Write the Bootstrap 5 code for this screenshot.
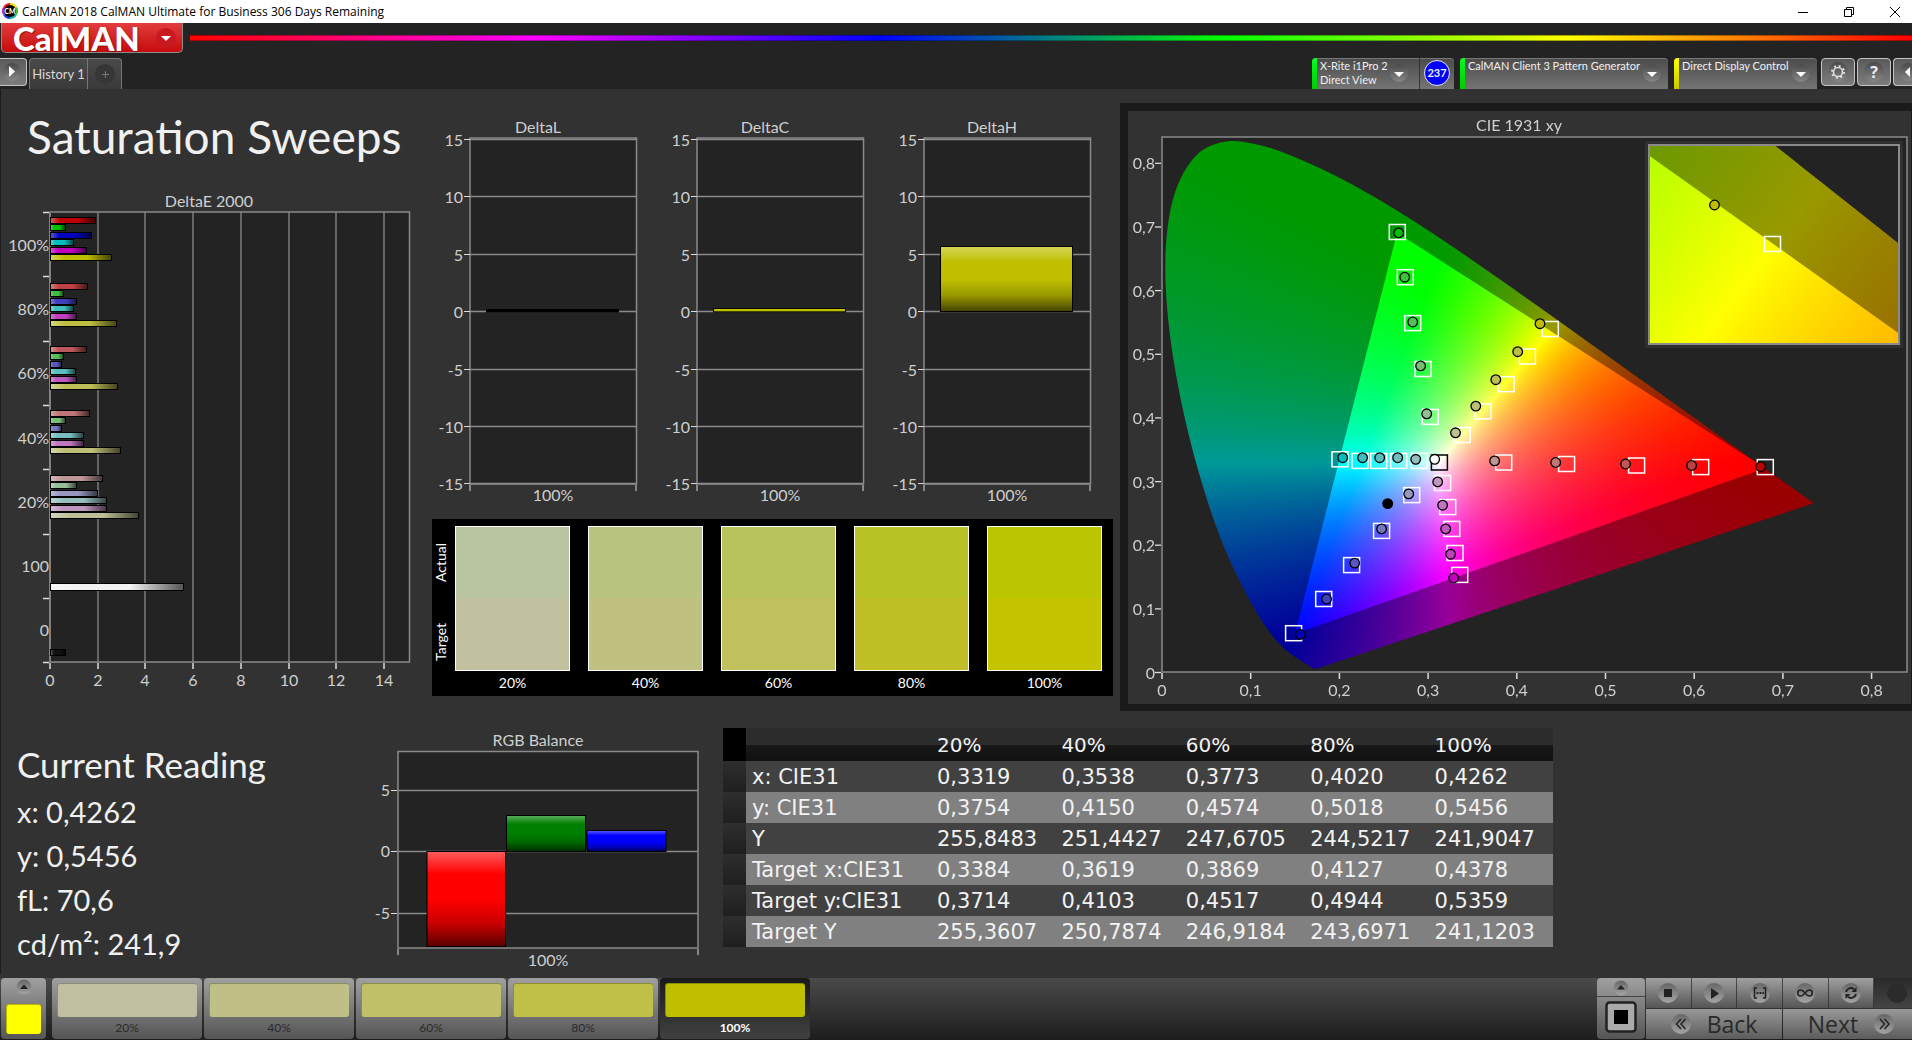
<!DOCTYPE html>
<html lang="en">
<head>
<meta charset="utf-8">
<meta name="viewport" content="width=device-width, initial-scale=1">
<title>CalMAN 2018 CalMAN Ultimate for Business</title>
<link href="https://cdn.jsdelivr.net/npm/bootstrap@5.3.0/dist/css/bootstrap.min.css" rel="stylesheet">
<style>
  body { background: #323232; color: #f0f0f0; font-family: Lato, "Open Sans", sans-serif; font-size: 16px; overflow-x: hidden; }
  button { font-family: inherit; }
  svg { display: block; }
  .window-bar { background: #fff; color: #000; height: 23px; font: 12px/23px "Open Sans", "Noto Sans", sans-serif; overflow: hidden; }
  .app-icon { margin: 3px 4px 0 2px; }
  .window-controls { margin-right: -6px; }
  .window-btn { background: none; border: 0; padding: 0; width: 46px; height: 23px; display: flex; align-items: center; justify-content: center; }
  .brand-row { background: #232323; height: 34px; }
  .brand-btn { width: 182px; height: 30px; margin-left: 1px; border: 1px solid #8d8d8d; border-top: 0; border-radius: 0 0 5px 5px; background: linear-gradient(#e23d3d, #c70b0b); color: #fff; padding: 0 6px 0 11px; font-weight: 900; font-size: 33px; line-height: 28px; text-shadow: 1px 1px 1px #6009; }
  .spectrum { height: 6px; margin: 12px 0 0 7px; background: linear-gradient(90deg, #f00, #f0f, #00f, #0f0, #ff0, #f00); border: 1px solid #0005; border-width: 1px 0; }
  .tab-row { background: #232323; height: 32px; padding-top: 1px; font-size: 11px; line-height: 14px; overflow: hidden; }
  .glass { border: 1px solid #c4c4c4; border-radius: 4px; background: linear-gradient(#5a5a5a, #7d7d7d); padding: 0; width: 34px; height: 28px; display: flex; align-items: center; justify-content: center; margin-right: 2px; }
  .glass-edge { width: 19px; margin-right: 0; }
  .glass-open { width: 27px; }
  .history-tabs { border: 1px solid #777; border-bottom: 0; border-radius: 4px 4px 0 0; background: linear-gradient(#4a4a4a, #3a3a3a); height: 31px; }
  .history-tabs button { background: none; border: 0; color: #d8d8d8; padding: 0; font-size: 13px; }
  .history-name { width: 57px; }
  .history-tabs .history-add { width: 34px; border-left: 1px solid #777; }
  .device { border: 0; border-radius: 4px 4px 0 0; background: linear-gradient(#4b4b4b, #757575); box-shadow: inset 0 1px #777; color: #f0f0f0; padding: 0 6px 0 0; height: 31px; display: flex; text-align: left; overflow: hidden; margin-right: 6px; }
  .device-led { width: 5px; height: 31px; margin-right: 3px; background: linear-gradient(#00ff1e, #0c0); flex: none; }
  .led-wait { background: linear-gradient(#ff0, #c8c800); }
  .device-text { padding-top: 1px; }
  .device-meter { width: 142px; padding-right: 0; }
  .device-source { width: 208px; }
  .device-display { width: 143px; margin-right: 4px; }
  .meter-count { border-left: 1px solid #333; width: 35px; height: 31px; margin-left: 10px; }
  .count-badge { width: 26px; height: 26px; border-radius: 50%; background: #00f; border: 1px solid #e8e8e8; font-size: 11px; font-weight: 700; line-height: 24px; text-align: center; margin-top: 2px; }
  .stage { border-left: 1px solid #1c1c1c; }
  .flex-sweep { flex: 431 1 0; min-width: 0; }
  .flex-center { flex: 688 1 0; min-width: 0; }
  .flex-cie { flex: 792 1 0; min-width: 0; }
  .page-title { font-size: 46px; line-height: 50px; margin: 23px 0 18px 26px; font-weight: 400; color: #f0f0f0; white-space: nowrap; }
  .axis { font: 16px Lato, sans-serif; fill: #cfcfcf; }
  .swatches { background: #000; color: #fff; padding: 7px 11px 0 1px; margin: 7px 7px 0 0; font-size: 14px; height: 177px; }
  .swatch-side { width: 22px; }
  .swatch-side span { writing-mode: vertical-rl; transform: rotate(180deg); line-height: 16px; height: 72px; text-align: center; }
  .swatch-grid { flex: 1; gap: 18px; }
  .swatch-cell { flex: 1 1 0; text-align: center; }
  .swatch-chip { height: 145px; border: 1px solid #fff; margin-bottom: 1px; }
  .cie-frame { background: #323232; border: solid #1a1a1a; border-width: 8px 1px 7px 8px; margin-top: 14px; }
  .cie-stage { position: relative; }
  .cie-stage svg { width: 100%; }
  .cie-canvas { position: absolute; left: 0; top: 0; width: 100%; height: 100%; }
  .cie-top { position: relative; }
  .flex-reading { flex: 369 1 0; min-width: 0; }
  .reading { padding: 33px 0 0 16px; white-space: nowrap; }
  .reading h2 { font-size: 35px; line-height: 40px; margin: 0 0 6px; font-weight: 400; }
  .reading p { font-size: 29px; line-height: 44px; margin: 0; }
  .flex-rgb { flex: 340 1 0; min-width: 0; padding-top: 18px; }
  .flex-grid { flex: 843 1 0; min-width: 0; }
  .flex-spare { flex: 359 1 0; }
  .grid-pad { padding: 17px 0 0 13px; }
  .readings { width: 100%; border-collapse: collapse; font: 21px/30px "DejaVu Sans", sans-serif; color: #f2f2f2; table-layout: fixed; }
  .col-grip { width: 23px; }
  .col-name { width: 185px; }
  .readings th, .readings td { font-weight: 400; padding: 0 0 0 6px; height: 31px; white-space: nowrap; }
  .readings thead th { font-size: 20px; height: 33px; background: linear-gradient(#2c2c2c 0 50%, #181818 52%, #101010); }
  .readings thead td { background: #000; }
  .readings tbody tr { background: #414141; }
  .readings tbody tr:nth-child(even) { background: #808080; }
  .readings tbody td:first-child { background: linear-gradient(#2e2e2e, #1f1f1f); }
  .dock { background: linear-gradient(#4a4a4a, #1d1d1d); height: 62px; padding: 0 0 1px 1px; overflow: hidden; }
  .steel { background: linear-gradient(#a0a0a0, #555); border: 0; padding: 0; color: #2a2a2a; display: flex; align-items: center; justify-content: center; }
  .current-btn { width: 45px; border-radius: 4px; flex-direction: column; justify-content: space-between; padding: 1px 0 5px; margin-right: 6px; }
  .current-chip { width: 35px; height: 30px; background: #ff0; border: 1px solid #b8b800; border-width: 1px 0 0 1px; border-radius: 3px; }
  .step-list { gap: 2px; }
  .step { width: 150px; border-radius: 4px; flex-direction: column; justify-content: flex-start; padding: 5px 5px 0; font-size: 12px; line-height: 22px; }
  .step i { display: block; width: 100%; height: 36px; border-radius: 3px; border: 1px solid #0004; border-width: 1px 0 0 1px; }
  .step-active { background: linear-gradient(#1a1a1a, #404040); color: #fff; font-weight: 700; }
  .transport { width: 273px; margin-right: -7px; gap: 1px; }
  .transport-line { gap: 1px; height: 30px; }
  .transport .steel { flex: 1 1 0; }
  .transport .blank { background: linear-gradient(#2a2a2a, #444); }
  .transport .nav-btn { font: 23px/30px "Open Sans", sans-serif; gap: 16px; background: linear-gradient(#989898, #5c5c5c); }
  .target-btn { width: 48px; height: 61px; border-radius: 4px; flex-direction: column; justify-content: space-between; padding: 1px 0 6px; margin-right: 1px; }
</style>
</head>
<body class="d-flex flex-column min-vh-100">

<svg width="0" height="0" class="position-absolute" aria-hidden="true">
  <defs>
    <linearGradient id="knobFill" x2="0" y2="1"><stop offset="0" stop-color="#4a4a4a"/><stop offset="1" stop-color="#868686"/></linearGradient>
    <linearGradient id="knobSteel" x2="0" y2="1"><stop offset="0" stop-color="#666"/><stop offset="1" stop-color="#a4a4a4"/></linearGradient>
    <linearGradient id="barAcross"><stop offset="0" stop-color="#fff" stop-opacity=".35"/><stop offset=".22" stop-color="#fff" stop-opacity="0"/><stop offset=".6" stop-color="#000" stop-opacity="0"/><stop offset="1" stop-color="#000" stop-opacity=".65"/></linearGradient>
    <linearGradient id="barDown" x2="0" y2="1"><stop offset="0" stop-color="#fff" stop-opacity=".36"/><stop offset=".24" stop-color="#fff" stop-opacity="0"/><stop offset=".5" stop-color="#000" stop-opacity="0"/><stop offset=".75" stop-color="#000" stop-opacity=".2"/><stop offset="1" stop-color="#000" stop-opacity=".65"/></linearGradient>
  </defs>
</svg>

<header>
  <div class="window-bar d-flex">
    <svg width="16" height="16" viewBox="0 0 16 16" class="app-icon" aria-hidden="true">
      <g fill="none" stroke-width="3"><path d="M8 1.5A6.500 6.500 0 0 1 13.600 4.750" stroke="#e6d800"/><path d="M13.600 4.750A6.500 6.500 0 0 1 13.600 11.250" stroke="#3ec41c"/><path d="M13.600 11.250A6.500 6.500 0 0 1 8 14.500" stroke="#12b0a0"/><path d="M8 14.500A6.500 6.500 0 0 1 2.400 11.250" stroke="#2a3fe0"/><path d="M2.400 11.250A6.500 6.500 0 0 1 2.400 4.750" stroke="#c01fc8"/><path d="M2.400 4.750A6.500 6.500 0 0 1 8 1.500" stroke="#e8262c"/></g>
      <circle cx="8" cy="8" r="6" fill="#000"/><text x="8" y="10.500" text-anchor="middle" font-family="Lato, sans-serif" font-weight="900" font-size="7" fill="#fff">CM</text>
    </svg>
    <span>CalMAN 2018 CalMAN Ultimate for Business 306 Days Remaining</span>
    <div class="window-controls ms-auto d-flex">
      <button class="window-btn" aria-label="Minimize"><svg width="10" height="10"><path d="M0 5.500H10" stroke="#000"/></svg></button>
      <button class="window-btn" aria-label="Restore"><svg width="10" height="10" fill="none" stroke="#000"><path d="M.5 2.500H7.500V9.500H.5ZM2.500 2.500V.5H9.500V7.500H7.500"/></svg></button>
      <button class="window-btn" aria-label="Close"><svg width="10" height="10" stroke="#000"><path d="M0 0L10 10M10 0L0 10"/></svg></button>
    </div>
  </div>
  <div class="brand-row d-flex align-items-start">
    <button class="brand-btn d-flex justify-content-between align-items-center"><span>CalMAN</span>
      <svg width="20" height="20" aria-hidden="true"><circle cx="10" cy="10" r="10" fill="#c81820"/><path d="M5 8H15L10 13Z" fill="#fff"/></svg></button>
    <div class="spectrum flex-grow-1"></div>
  </div>
  <div class="tab-row d-flex">
    <button class="glass glass-open rounded-start-0 border-start-0" aria-label="Show panel"><svg width="20" height="20"><circle cx="9" cy="10" r="9" fill="url(#knobFill)"/><path d="M6 4V15L12 9.500Z" fill="#fff"/></svg></button>
    <div class="history-tabs d-flex">
      <button class="history-name">History 1</button>
      <button class="history-add d-flex align-items-center justify-content-center" aria-label="Add history"><svg width="20" height="20"><circle cx="10" cy="10" r="10" fill="#363636"/><path d="M7 10.500H14M10.500 7V14" stroke="#777"/></svg></button>
    </div>
    <div class="d-flex ms-auto">
      <button class="device device-meter"><span class="device-led"></span><span class="device-text flex-grow-1 text-nowrap">X-Rite i1Pro 2<br>Direct View</span>
        <svg width="20" height="20" class="mt-1 flex-shrink-0"><circle cx="10" cy="11" r="9" fill="url(#knobFill)"/><path d="M5 10H15L10 15Z" fill="#fff"/></svg>
        <span class="meter-count d-flex justify-content-center"><span class="count-badge">237</span></span></button>
      <button class="device device-source"><span class="device-led"></span><span class="device-text flex-grow-1 text-nowrap">CalMAN Client 3 Pattern Generator</span>
        <svg width="20" height="20" class="mt-1 flex-shrink-0"><circle cx="10" cy="11" r="9" fill="url(#knobFill)"/><path d="M5 10H15L10 15Z" fill="#fff"/></svg></button>
      <button class="device device-display"><span class="device-led led-wait"></span><span class="device-text flex-grow-1 text-nowrap">Direct Display Control</span>
        <svg width="20" height="20" class="mt-1 flex-shrink-0"><circle cx="10" cy="11" r="9" fill="url(#knobFill)"/><path d="M5 10H15L10 15Z" fill="#fff"/></svg></button>
      <button class="glass" aria-label="Settings"><svg width="20" height="20"><circle cx="10" cy="10" r="10" fill="url(#knobFill)"/><circle cx="10" cy="10" r="4.500" fill="none" stroke="#ddd" stroke-width="1.600"/><circle cx="10" cy="10" r="6" fill="none" stroke="#ddd" stroke-width="2" stroke-dasharray="2 2.710"/></svg></button>
      <button class="glass" aria-label="Help"><svg width="20" height="20"><circle cx="10" cy="10" r="10" fill="url(#knobFill)"/><text x="10" y="16" text-anchor="middle" font-family="Open Sans, sans-serif" font-weight="700" font-size="16" fill="#eee">?</text></svg></button>
      <button class="glass glass-edge rounded-end-0 border-end-0" aria-label="Collapse"><svg width="18" height="20" class="ms-1"><circle cx="10" cy="10" r="9" fill="url(#knobFill)"/><path d="M12 5V15L7 10Z" fill="#fff"/></svg></button>
    </div>
  </div>
</header>

<main class="stage">
  <div class="d-flex">
    <section class="flex-sweep">
      <h1 class="page-title">Saturation Sweeps</h1>
      <svg id="deltaE" viewBox="1 180 431 520" width="100%" role="img" aria-label="DeltaE 2000"></svg>
    </section>
    <section class="flex-center">
      <div class="d-flex pt-3">
        <svg id="deltaL" viewBox="0 105 227 407" width="33%" role="img" aria-label="DeltaL"></svg>
        <svg id="deltaC" viewBox="0 105 227 407" width="33%" role="img" aria-label="DeltaC"></svg>
        <svg id="deltaH" viewBox="0 105 227 407" width="33%" role="img" aria-label="DeltaH"></svg>
      </div>
      <div class="swatches d-flex">
        <div class="swatch-side"><span class="d-block mb-2">Actual</span><span class="d-block">Target</span></div>
        <div class="swatch-grid d-flex" id="swatches"></div>
      </div>
    </section>
    <section class="flex-cie">
      <div class="cie-frame"><div class="cie-stage">
        <canvas class="cie-canvas" id="cieCanvas" width="783" height="593"></canvas>
        <svg id="cie" class="cie-top" viewBox="1128 111 783 593" role="img" aria-label="CIE 1931 xy"></svg>
      </div></div>
    </section>
  </div>

  <div class="d-flex">
    <section class="flex-reading"><div class="reading">
      <h2>Current Reading</h2>
      <p>x: 0,4262</p><p>y: 0,5456</p><p>fL: 70,6</p><p>cd/m²: 241,9</p>
    </div></section>
    <section class="flex-rgb"><svg id="rgb" viewBox="370 730 340 245" width="100%" role="img" aria-label="RGB Balance"></svg></section>
    <section class="flex-grid"><div class="grid-pad">
      <table class="readings">
        <colgroup><col class="col-grip"><col class="col-name"><col><col><col><col><col></colgroup>
        <thead><tr><td></td><th></th><th>20%</th><th>40%</th><th>60%</th><th>80%</th><th>100%</th></tr></thead>
        <tbody>
          <tr><td></td><th>x: CIE31</th><td>0,3319</td><td>0,3538</td><td>0,3773</td><td>0,4020</td><td>0,4262</td></tr>
          <tr><td></td><th>y: CIE31</th><td>0,3754</td><td>0,4150</td><td>0,4574</td><td>0,5018</td><td>0,5456</td></tr>
          <tr><td></td><th>Y</th><td>255,8483</td><td>251,4427</td><td>247,6705</td><td>244,5217</td><td>241,9047</td></tr>
          <tr><td></td><th>Target x:CIE31</th><td>0,3384</td><td>0,3619</td><td>0,3869</td><td>0,4127</td><td>0,4378</td></tr>
          <tr><td></td><th>Target y:CIE31</th><td>0,3714</td><td>0,4103</td><td>0,4517</td><td>0,4944</td><td>0,5359</td></tr>
          <tr><td></td><th>Target Y</th><td>255,3607</td><td>250,7874</td><td>246,9184</td><td>243,6971</td><td>241,1203</td></tr>
        </tbody>
      </table>
    </div></section>
    <div class="flex-spare"></div>
  </div>
</main>

<footer class="dock d-flex mt-auto">
  <button class="steel current-btn" aria-label="Current colour"><svg width="16" height="16"><circle cx="8" cy="8" r="7.500" fill="url(#knobSteel)"/><path d="M4 10H12L8 5.500Z" fill="#222"/></svg><span class="current-chip"></span></button>
  <div class="step-list d-flex" id="steps"></div>
  <div class="d-flex ms-auto">
    <button class="steel target-btn" aria-label="Window pattern">
      <svg width="48" height="20"><circle cx="24" cy="9" r="7.500" fill="url(#knobSteel)"/><path d="M20 10.500H28L24 6Z" fill="#222"/><path d="M0 17.500H48" stroke="#444"/></svg>
      <svg width="32" height="32"><rect x="1.500" y="1.500" width="29" height="29" rx="3" fill="#aaa" stroke="#222" stroke-width="2.500"/><rect x="9" y="9" width="14" height="14" fill="#000"/></svg>
    </button>
    <div class="transport d-flex flex-column">
      <div class="transport-line d-flex">
        <button class="steel" aria-label="Stop"><svg width="20" height="20"><circle cx="10" cy="10" r="10" fill="url(#knobSteel)"/><rect x="6" y="6" width="8" height="8" fill="#222"/></svg></button>
        <button class="steel" aria-label="Play"><svg width="20" height="20"><circle cx="10" cy="10" r="10" fill="url(#knobSteel)"/><path d="M7 5V16L15 10.500Z" fill="#222"/></svg></button>
        <button class="steel" aria-label="Read range"><svg width="20" height="20"><circle cx="10" cy="10" r="10" fill="url(#knobSteel)"/><path d="M7 5H4.500V15H7M13 5H15.500V15H13" fill="none" stroke="#222" stroke-width="1.500"/><path d="M6.500 10H14" stroke="#222" stroke-width="2" stroke-dasharray="2 1"/></svg></button>
        <button class="steel" aria-label="Loop"><svg width="20" height="20"><circle cx="10" cy="10" r="10" fill="url(#knobSteel)"/><path d="M10 10C8 7.500 7 7 5.700 7A3 3 0 0 0 5.700 13C7 13 8 12.500 10 10C12 7.500 13 7 14.300 7A3 3 0 0 1 14.300 13C13 13 12 12.500 10 10Z" fill="none" stroke="#222" stroke-width="1.500"/></svg></button>
        <button class="steel" aria-label="Refresh"><svg width="20" height="20"><circle cx="10" cy="10" r="10" fill="url(#knobSteel)"/><path d="M5 9A5 5 0 0 1 13 6.200M15 11A5 5 0 0 1 7 13.800" fill="none" stroke="#222" stroke-width="2"/><path d="M15.500 4V9H10.500ZM4.500 16V11H9.500Z" fill="#222"/></svg></button>
        <button class="steel blank" aria-label="Blank"><svg width="20" height="20"><circle cx="10" cy="10" r="10" fill="#2b2b2b"/></svg></button>
      </div>
      <div class="transport-line d-flex mt-auto">
        <button class="steel nav-btn"><svg width="20" height="20"><circle cx="10" cy="10" r="10" fill="url(#knobSteel)"/><path d="M10 5L5.500 10L10 15M14.500 5L10 10L14.500 15" fill="none" stroke="#222" stroke-width="1.500"/></svg>Back</button>
        <button class="steel nav-btn">Next<svg width="20" height="20"><circle cx="10" cy="10" r="10" fill="url(#knobSteel)"/><path d="M6 5L10.500 10L6 15M10.500 5L15 10L10.500 15" fill="none" stroke="#222" stroke-width="1.500"/></svg></button>
      </div>
    </div>
  </div>
</footer>

<script>
const line = (x1, y1, x2, y2, c = '#8a8a8a', w = 1) => `<path d="M${x1} ${y1}L${x2} ${y2}" stroke="${c}" stroke-width="${w}"/>`;
const label = (x, y, s, a = 'middle') => `<text class="axis" x="${x}" y="${y}" text-anchor="${a}">${s}</text>`;
const plot = (x, y, w, h) => `<rect x="${x}" y="${y}" width="${w}" height="${h}" fill="#232323" stroke="#8a8a8a" stroke-width="1.500"/>`;
const bar = (x, y, w, h, c, grad) => `<rect x="${x}" y="${y}" width="${w}" height="${h}" fill="${c}"/><rect x="${x}" y="${y}" width="${w}" height="${h}" fill="url(#${grad})" stroke="#000"/>`;
const put = (id, s) => document.getElementById(id).innerHTML = s;

// measured colours, from full saturation down to 20 %
const lows = [0, 64, 88, 118, 150];
const hues = { r: '100', g: '010', b: '001', c: '011', m: '101', y: '110' };
const tone = (h, i) => 'rgb(' + [...hues[h]].map(v => v === '1' ? 190 : lows[i]).join(',') + ')';

// DeltaE 2000, horizontal bars
{
  let s = label(209, 207, 'DeltaE 2000') + plot(50, 212, 359.5, 450);
  for (let i = 0; i < 8; i++) {
    const x = 50 + Math.round(i * 47.700);
    s += line(x, 212, x, 662, '#8a8a8a', 1.3) + line(x, 663, x, 669, '#ddd', 1.5) + label(x, 686, i * 2);
  }
  for (let i = 0; i < 8; i++) { const y = Math.round(212 + i * 64.300) + .5; s += line(43, y, 49, y, '#ddd', 1.5); }
  ['100%', '80%', '60%', '40%', '20%', '100', '0'].forEach((t, i) => s += label(49, Math.round(251 + i * 64.200), t, 'end'));
  const sets = [[217, 45, 15, 41, 23, 36, 61], [283, 37, 13, 26, 23, 26, 66], [346, 36, 13, 11, 25, 26, 67], [410, 39, 15, 11, 33, 33, 70], [475, 52, 26, 47, 56, 56, 88]];
  sets.forEach(([top, ...w], g) => w.forEach((n, i) => s += bar(50.5, top + .5 + Math.round(i * 7.400), n, 6, tone('rgbcmy'[i], g), 'barAcross')));
  s += bar(50.5, 583.5, 133, 7, '#f2f2f2', 'barAcross') + bar(50.5, 649.5, 15, 6, '#111', 'barAcross');
  put('deltaE', s);
}

// DeltaL, DeltaC and DeltaH, vertical bars
[['deltaL', 'DeltaL', 309, 2.5, '#000'], ['deltaC', 'DeltaC', 308, 3.5, '#c8c800'], ['deltaH', 'DeltaH', 246, 65, '#bfbf00']].forEach(([id, title, top, h, c]) => {
  let s = label(106, 133, title) + plot(38, 138, 166.5, 346);
  [15, 10, 5, 0, -5, -10, -15].forEach((v, i) => {
    const y = Math.round(139 + i * 57.400) + .5;
    s += line(38, y, 204, y, '#8a8a8a', 1.5) + line(32, y, 38, y, '#ddd') + label(31, y + 6, v, 'end');
  });
  s += line(38, 485, 38, 491, '#ddd') + line(204, 485, 204, 491, '#ddd') + label(121, 501, '100%') + bar(54.5, top + .5, 132, h, c, 'barDown');
  put(id, s);
});

// RGB balance
put('rgb', label(538, 747, 'RGB Balance') + plot(398, 752.5, 300, 196.5) +
  [[5, 791.5], [0, 852.5], [-5, 914.5]].map(([v, y]) => line(398, y, 698, y, '#8a8a8a', 1.5) + line(391, y, 397, y, '#ddd') + label(390, y + 5, v, 'end')).join('') +
  bar(427, 852.5, 78.5, 95, '#f00', 'barDown') + bar(506.5, 816.5, 79, 36, '#008000', 'barDown') + bar(587, 831.5, 79, 21, '#00f', 'barDown') +
  line(398, 950, 398, 956, '#ddd') + line(698, 950, 698, 956, '#ddd') + label(548, 967, '100%'));

// Actual over target swatches, and the step buttons below
put('swatches', [['20%', '#b8c3a0', '#c0c09e'], ['40%', '#b8c381', '#c0c081'], ['60%', '#b8c35c', '#c0c05c'], ['80%', '#b8c326', '#c0c026'], ['100%', '#bcc600', '#c4c400']]
  .map(([t, a, b]) => `<div class="swatch-cell"><div class="swatch-chip" style="background:linear-gradient(${a} 50%,${b} 50%)"></div>${t}</div>`).join(''));
put('steps', [['20%', '#c0c0a0'], ['40%', '#c0c086'], ['60%', '#c0c068'], ['80%', '#c0c048'], ['100%', '#bfbf00']]
  .map(([t, c], i) => `<button class="steel step${i === 4 ? ' step-active' : ''}"><i style="background-color:${c}"></i>${t}</button>`).join(''));

// CIE 1931 xy chromaticity diagram
const locus = [.1741,.005,.1733,.0048,.1714,.0051,.1689,.0069,.1644,.0109,.1566,.0177,.144,.0297,.1355,.0399,.1241,.0578,.1096,.0868,.0913,.1327,.0687,.2007,.0454,.295,.0235,.4127,.0082,.5384,.0039,.6548,.0139,.7502,.0389,.812,.0743,.8338,.1142,.8262,.1547,.8059,.1929,.7816,.2296,.7543,.2658,.7243,.3016,.6923,.3373,.6589,.3731,.6245,.4087,.5896,.4441,.5547,.4788,.5202,.5125,.4866,.5448,.4544,.5752,.4242,.627,.3725,.6658,.334,.6915,.3083,.726,.274,.7347,.2653];
const gamut = [.68, .32, .265, .69, .15, .06];

function outline(ctx, pts, X, Y, smooth) {
  const n = pts.length / 2, P = i => { i = Math.max(0, Math.min(n - 1, i)); return [X(pts[2 * i]), Y(pts[2 * i + 1])]; };
  ctx.beginPath(); ctx.moveTo(...P(0));
  for (let i = 0; i < n - 1; i++) {
    const a = P(i - 1), b = P(i), c = P(i + 1), d = P(i + 2);
    if (smooth) ctx.bezierCurveTo(b[0] + (c[0] - a[0]) / 6, b[1] + (c[1] - a[1]) / 6, c[0] - (d[0] - b[0]) / 6, c[1] - (d[1] - b[1]) / 6, c[0], c[1]);
    else ctx.lineTo(...c);
  }
  ctx.closePath();
}

// fills one rectangle of the canvas with the colours of its chromaticity range
function paint(ctx, px, py, w, h, x0, y0, kx, ky) {
  const X = x => px + (x - x0) * kx, Y = y => py + h - (y - y0) * ky;
  [.6, 1].forEach(gain => {
    const layer = document.createElement('canvas'); layer.width = w; layer.height = h;
    const lc = layer.getContext('2d'), img = lc.createImageData(w, h);
    for (let j = 0; j < h; j++) for (let i = 0; i < w; i++) {
      const x = x0 + (i + .5) / kx, y = Math.max(.001, y0 + (h - j - .5) / ky), z = 1 - x - y;
      const rgb = [3.2406 * x - 1.5372 * y - .4986 * z, -.9689 * x + 1.8758 * y + .0415 * z, .0557 * x - .204 * y + 1.057 * z].map(v => Math.max(0, v));
      const m = 255 * gain / Math.max(...rgb), k = 4 * (j * w + i);
      for (let q = 0; q < 3; q++) img.data[k + q] = rgb[q] * m;
      img.data[k + 3] = 255;
    }
    lc.putImageData(img, 0, 0);
    ctx.save();
    ctx.beginPath(); ctx.rect(px, py, w, h); ctx.clip();
    outline(ctx, locus, X, Y, true); ctx.clip();
    if (gain === 1) { outline(ctx, gamut, X, Y, false); ctx.clip(); }
    ctx.drawImage(layer, px, py);
    ctx.restore();
  });
}
const cc = document.getElementById('cieCanvas').getContext('2d');
cc.translate(-1128, -111);
cc.fillStyle = '#232323'; cc.fillRect(1162, 137, 745, 535);
paint(cc, 1162, 137, 745, 535, 0, 0, 887, 636.5);
cc.fillStyle = '#303030'; cc.fillRect(1645, 141, 258, 207);
cc.fillStyle = '#232323'; cc.fillRect(1649, 145, 250, 199);
paint(cc, 1649, 145, 250, 199, .4128, .511, 5000, 3990);

const targets = [[.2653,.692],[.2743,.621],[.2826,.549],[.2943,.4768],[.3025,.4016],[.2007,.335],[.2232,.3325],[.2443,.3325],[.2668,.3325],[.2901,.3325],[.3164,.2977],[.3221,.2598],[.3266,.2256],[.3303,.1877],[.3356,.1534],[.2815,.2787],[.2476,.2225],[.2138,.1687],[.1823,.1155],[.1484,.0617],[.3384,.3732],[.3619,.4103],[.3879,.4530],[.4120,.4965],[.4378,.5396],[.3852,.33],[.4562,.3276],[.5351,.3252],[.6073,.3227],[.6802,.3227]];
const readings = {
  g: [[.2668,.6907],[.2736,.621],[.2826,.5507],[.2916,.4817],[.2984,.4065]],
  c: [[.2037,.3374],[.2262,.3374],[.2454,.3374],[.2657,.3374],[.286,.335]],
  m: [[.3288,.1485],[.3254,.1858],[.3198,.2256],[.3164,.2628],[.3108,.2995]],
  b: [[.156,.0599],[.1856,.1155],[.2172,.1718],[.2476,.2256],[.2781,.2806]],
  r: [[.6749,.3233],[.5971,.3252],[.5227,.3276],[.4438,.33],[.375,.3325]],
  y: [[.4262,.5480],[.401,.504],[.3763,.460],[.3538,.4185],[.3309,.3766]]
};
{
  const X = x => (1162 + x * 887).toFixed(1), Y = y => (672.5 - y * 636.5).toFixed(1);
  const box = (x, y, c) => `<rect x="${x - 8}" y="${y - 7.500}" width="16" height="15" fill="none" stroke="${c}" stroke-width="1.500"/>`;
  const dot = (x, y, c) => `<circle cx="${x}" cy="${y}" r="4.800" fill="${c}" stroke="#000" stroke-width="1.300"/>`;
  let s = label(1519, 131, 'CIE 1931 xy') + '<rect x="1162" y="137" width="745" height="535" fill="none" stroke="#8a8a8a" stroke-width="1.500"/>';
  for (let i = 0; i < 9; i++) {
    const t = i ? '0,' + i : '0', x = X(i / 10), y = Y(i / 10);
    s += line(x, 673, x, 679, '#ddd', 1.5) + label(x, 696, t) + line(1155, y, 1161, y, '#ddd', 1.3) + label(1155, +y + 6, t, 'end');
  }
  targets.forEach(([x, y]) => s += box(X(x), Y(y), '#fff'));
  s += box(X(.3127), Y(.33), '#000');
  for (const h in readings) readings[h].forEach(([x, y], i) => s += dot(X(x), Y(y), tone(h, i)));
  s += dot(X(.3074), Y(.335), '#fff') + dot(X(.2544), Y(.2653), '#000');
  s += '<rect x="1649" y="145" width="250" height="199" fill="none" stroke="#8a8a8a" stroke-width="2"/>' + box(1772.5, 244, '#fff') + dot(1714.5, 205, '#bfbf00');
  put('cie', s);
}
</script>
<script src="https://cdn.jsdelivr.net/npm/bootstrap@5.3.0/dist/js/bootstrap.bundle.min.js"></script>
</body>
</html>
